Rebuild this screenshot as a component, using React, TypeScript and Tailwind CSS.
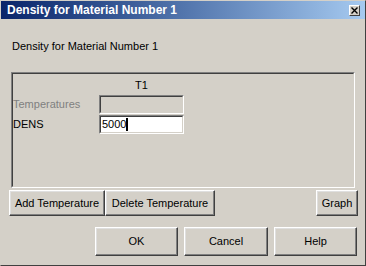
const raised =
  "border border-t-white border-l-white border-r-[#404040] border-b-[#404040] shadow-[inset_-1px_-1px_#808080,inset_1px_1px_#dfdfdf] bg-[#d4d0c8] flex items-center justify-center text-[11px] text-black";

const Btn = ({ label, className }: { label: string; className: string }) => (
  <div className={`${raised} ${className}`}>{label}</div>
);

const App = () => (
  <div
    className="w-[366px] h-[266px] bg-[#d4d0c8] border border-t-[#d4d0c8] border-l-[#d4d0c8] border-r-[#404040] border-b-[#404040] flex flex-col overflow-hidden"
    style={{ fontFamily: '"Liberation Sans", Arial, sans-serif' }}
  >
    {/* title bar */}
    <div className="h-[18px] bg-gradient-to-r from-[#0a246a] to-[#a6caf0] flex items-center justify-between pl-[6px] pr-[5px]">
      <span className="text-white font-bold text-[12px] leading-none">Density for Material Number 1</span>
      <div className="w-[11px] h-[11px] border border-t-white border-l-white border-r-[#404040] border-b-[#404040] bg-[#d4d0c8] flex items-center justify-center">
        <svg width="7" height="7" viewBox="0 0 7 7">
          <path d="M0.5 0.5 L6.5 6.5 M6.5 0.5 L0.5 6.5" stroke="#000" strokeWidth="1.4" />
        </svg>
      </div>
    </div>

    <div className="mt-[21px] pl-[11px] text-[11px] leading-[13px] text-black">Density for Material Number 1</div>

    {/* group box */}
    <div className="mt-[19px] ml-[10px] w-[344px] h-[116px] border border-t-[#808080] border-l-[#808080] border-r-white border-b-white">
      <div className="h-full border border-t-[#404040] border-l-[#404040] border-r-[#d4d0c8] border-b-[#d4d0c8] flex flex-col">
        <div className="flex pt-[5px]">
          <div className="w-[86px]" />
          <div className="w-[85px] text-center text-[11px] leading-[13px]">T1</div>
        </div>
        <div className="flex items-center mt-[3px] h-[19px]">
          <div className="w-[86px] text-[11px] text-[#808080]">Temperatures</div>
          <div className="w-[85px] h-[19px] border border-t-[#808080] border-l-[#808080] border-r-white border-b-white">
            <div className="h-full border border-t-[#404040] border-l-[#404040] border-r-[#d4d0c8] border-b-[#d4d0c8] bg-[#d4d0c8]" />
          </div>
        </div>
        <div className="flex items-center mt-[1px] h-[19px]">
          <div className="w-[86px] text-[11px] text-black">DENS</div>
          <div className="w-[85px] h-[19px] border border-t-[#808080] border-l-[#808080] border-r-white border-b-white">
            <div className="h-full border border-t-[#404040] border-l-[#404040] border-r-[#d4d0c8] border-b-[#d4d0c8] bg-white flex items-center pl-[1px]">
              <span className="text-[11px] leading-none text-black">5000</span>
              <span className="w-[2px] h-[13px] bg-black" />
            </div>
          </div>
        </div>
      </div>
    </div>

    <div className="flex mt-[2px] ml-[8px] mr-[7px] h-[26px]">
      <Btn label="Add Temperature" className="w-[96px] h-[26px]" />
      <Btn label="Delete Temperature" className="w-[110px] h-[26px]" />
      <div className="flex-1" />
      <Btn label="Graph" className="w-[42px] h-[26px]" />
    </div>

    <div className="flex justify-end mt-[11px] mr-[8px] gap-[6px]">
      <Btn label="OK" className="w-[83px] h-[29px]" />
      <Btn label="Cancel" className="w-[84px] h-[29px]" />
      <Btn label="Help" className="w-[83px] h-[29px]" />
    </div>
  </div>
);

export default App;
